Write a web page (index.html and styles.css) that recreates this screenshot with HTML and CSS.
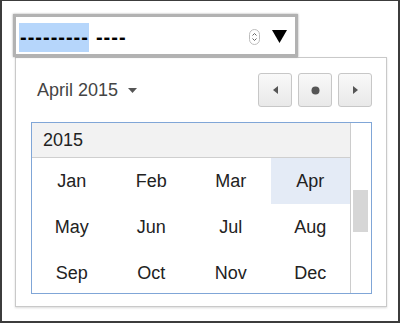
FILE: index.html
```html
<!DOCTYPE html>
<html>
<head>
  <meta name="viewport" content="width=device-width, initial-scale=1.0">
  <link rel="stylesheet" href="styles.css">
</head>
<body>
  <div class="frame">
    <!-- Month input -->
    <div class="date-input">
      <span class="seg seg-selected">---------</span>
      <span class="seg">----</span>
      <svg class="spinner" width="11" height="16" viewBox="0 0 11 16">
        <rect x="0.5" y="0.5" width="10" height="15" rx="5" fill="#fff" stroke="#bdbdbd"/>
        <polyline points="3.5,6.5 5.5,4.5 7.5,6.5" fill="none" stroke="#666" stroke-width="1"/>
        <polyline points="3.5,9.5 5.5,11.5 7.5,9.5" fill="none" stroke="#666" stroke-width="1"/>
      </svg>
      <svg class="drop" width="15" height="13" viewBox="0 0 15 13">
        <polygon points="0,0 15,0 7.5,13" fill="#000"/>
      </svg>
    </div>

    <!-- Picker popup -->
    <div class="picker">
      <div class="picker-head">
        <div class="title">April 2015
          <svg class="caret" width="9" height="5" viewBox="0 0 9 5"><polygon points="0,0 9,0 4.5,5" fill="#555"/></svg>
        </div>
        <div class="nav">
          <button class="nav-btn">
            <svg width="5" height="8" viewBox="0 0 5 8"><polygon points="5,0 5,8 0,4" fill="#555"/></svg>
          </button>
          <button class="nav-btn">
            <svg width="9" height="9" viewBox="0 0 9 9"><circle cx="4.5" cy="4.5" r="4" fill="#555"/></svg>
          </button>
          <button class="nav-btn">
            <svg width="5" height="8" viewBox="0 0 5 8"><polygon points="0,0 0,8 5,4" fill="#555"/></svg>
          </button>
        </div>
      </div>

      <div class="months-view">
        <div class="months-scroll">
          <div class="year-row">2015</div>
          <div class="months">
            <div class="month">Jan</div>
            <div class="month">Feb</div>
            <div class="month">Mar</div>
            <div class="month month-current">Apr</div>
            <div class="month">May</div>
            <div class="month">Jun</div>
            <div class="month">Jul</div>
            <div class="month">Aug</div>
            <div class="month">Sep</div>
            <div class="month">Oct</div>
            <div class="month">Nov</div>
            <div class="month">Dec</div>
          </div>
        </div>
        <div class="scrollbar">
          <div class="thumb"></div>
        </div>
      </div>
    </div>
  </div>
</body>
</html>
```

FILE: styles.css
```css
body {
  margin: 0;
  padding: 0;
  background: #fff;
  font-family: 'Liberation Sans', Arial, sans-serif;
  color: #222;
}

.frame {
  width: 400px;
  height: 323px;
  box-sizing: border-box;
  border: 2px solid #3c3c3c;
  border-top-width: 1px;
  padding: 13px 0 0 11px;
  overflow: hidden;
}

/* the month input with its focus ring */
.date-input {
  width: 285px;
  height: 43px;
  box-sizing: border-box;
  border: 3px solid #b2b2b2;
  box-shadow: 0 0 2px rgba(0, 0, 0, 0.35);
  background: #fff;
  display: flex;
  align-items: center;
  padding: 4px 8px 0 3px;
  position: relative;
  z-index: 2;
}

.seg {
  font-size: 20px;
  font-weight: bold;
  letter-spacing: 1px;
  line-height: 29px;
  color: #000;
  margin-right: 7px;
}

.seg-selected {
  background: #b6d6fb;
  padding-left: 1px;
}

.spinner {
  margin-left: auto;
  margin-top: -2px;
}

.drop {
  margin-left: 12px;
  margin-top: -2px;
}

/* popup */
.picker {
  margin-left: 2px;
  width: 372px;
  height: 250px;
  box-sizing: border-box;
  border: 1px solid #c9c9c9;
  box-shadow: 0 1px 2px rgba(0, 0, 0, 0.15);
  padding: 15px 14px 0 15px;
}

.picker-head {
  display: flex;
  align-items: center;
  justify-content: space-between;
  height: 34px;
}

.title {
  padding-left: 6px;
  font-size: 18px;
  color: #444;
  display: flex;
  align-items: center;
}

.caret {
  margin-left: 10px;
}

.nav {
  display: flex;
  gap: 6px;
}

.nav-btn {
  width: 34px;
  height: 34px;
  padding: 0;
  border: 1px solid #c7c7c7;
  border-radius: 3px;
  background: linear-gradient(#f9f9f9, #e9e9e9);
  display: flex;
  align-items: center;
  justify-content: center;
}

.months-view {
  margin-top: 15px;
  width: 341px;
  height: 172px;
  box-sizing: border-box;
  border: 1px solid #80a6d7;
  display: flex;
  overflow: hidden;
}

.months-scroll {
  flex: 1;
  overflow: hidden;
}

.year-row {
  height: 34px;
  line-height: 34px;
  padding-left: 11px;
  font-size: 18px;
  background: #f2f2f2;
  border-bottom: 1px solid #cfcfcf;
}

.months {
  display: grid;
  grid-template-columns: repeat(4, 1fr);
  grid-auto-rows: 46px;
}

.month {
  display: flex;
  align-items: center;
  justify-content: center;
  font-size: 18px;
  color: #222;
}

.month-current {
  background: #e4ebf6;
}

.scrollbar {
  width: 21px;
  box-sizing: border-box;
  border-left: 1px solid #cccccc;
  padding: 67px 0 0 2px;
}

.thumb {
  width: 15px;
  height: 42px;
  background: #d6d6d6;
}
```
